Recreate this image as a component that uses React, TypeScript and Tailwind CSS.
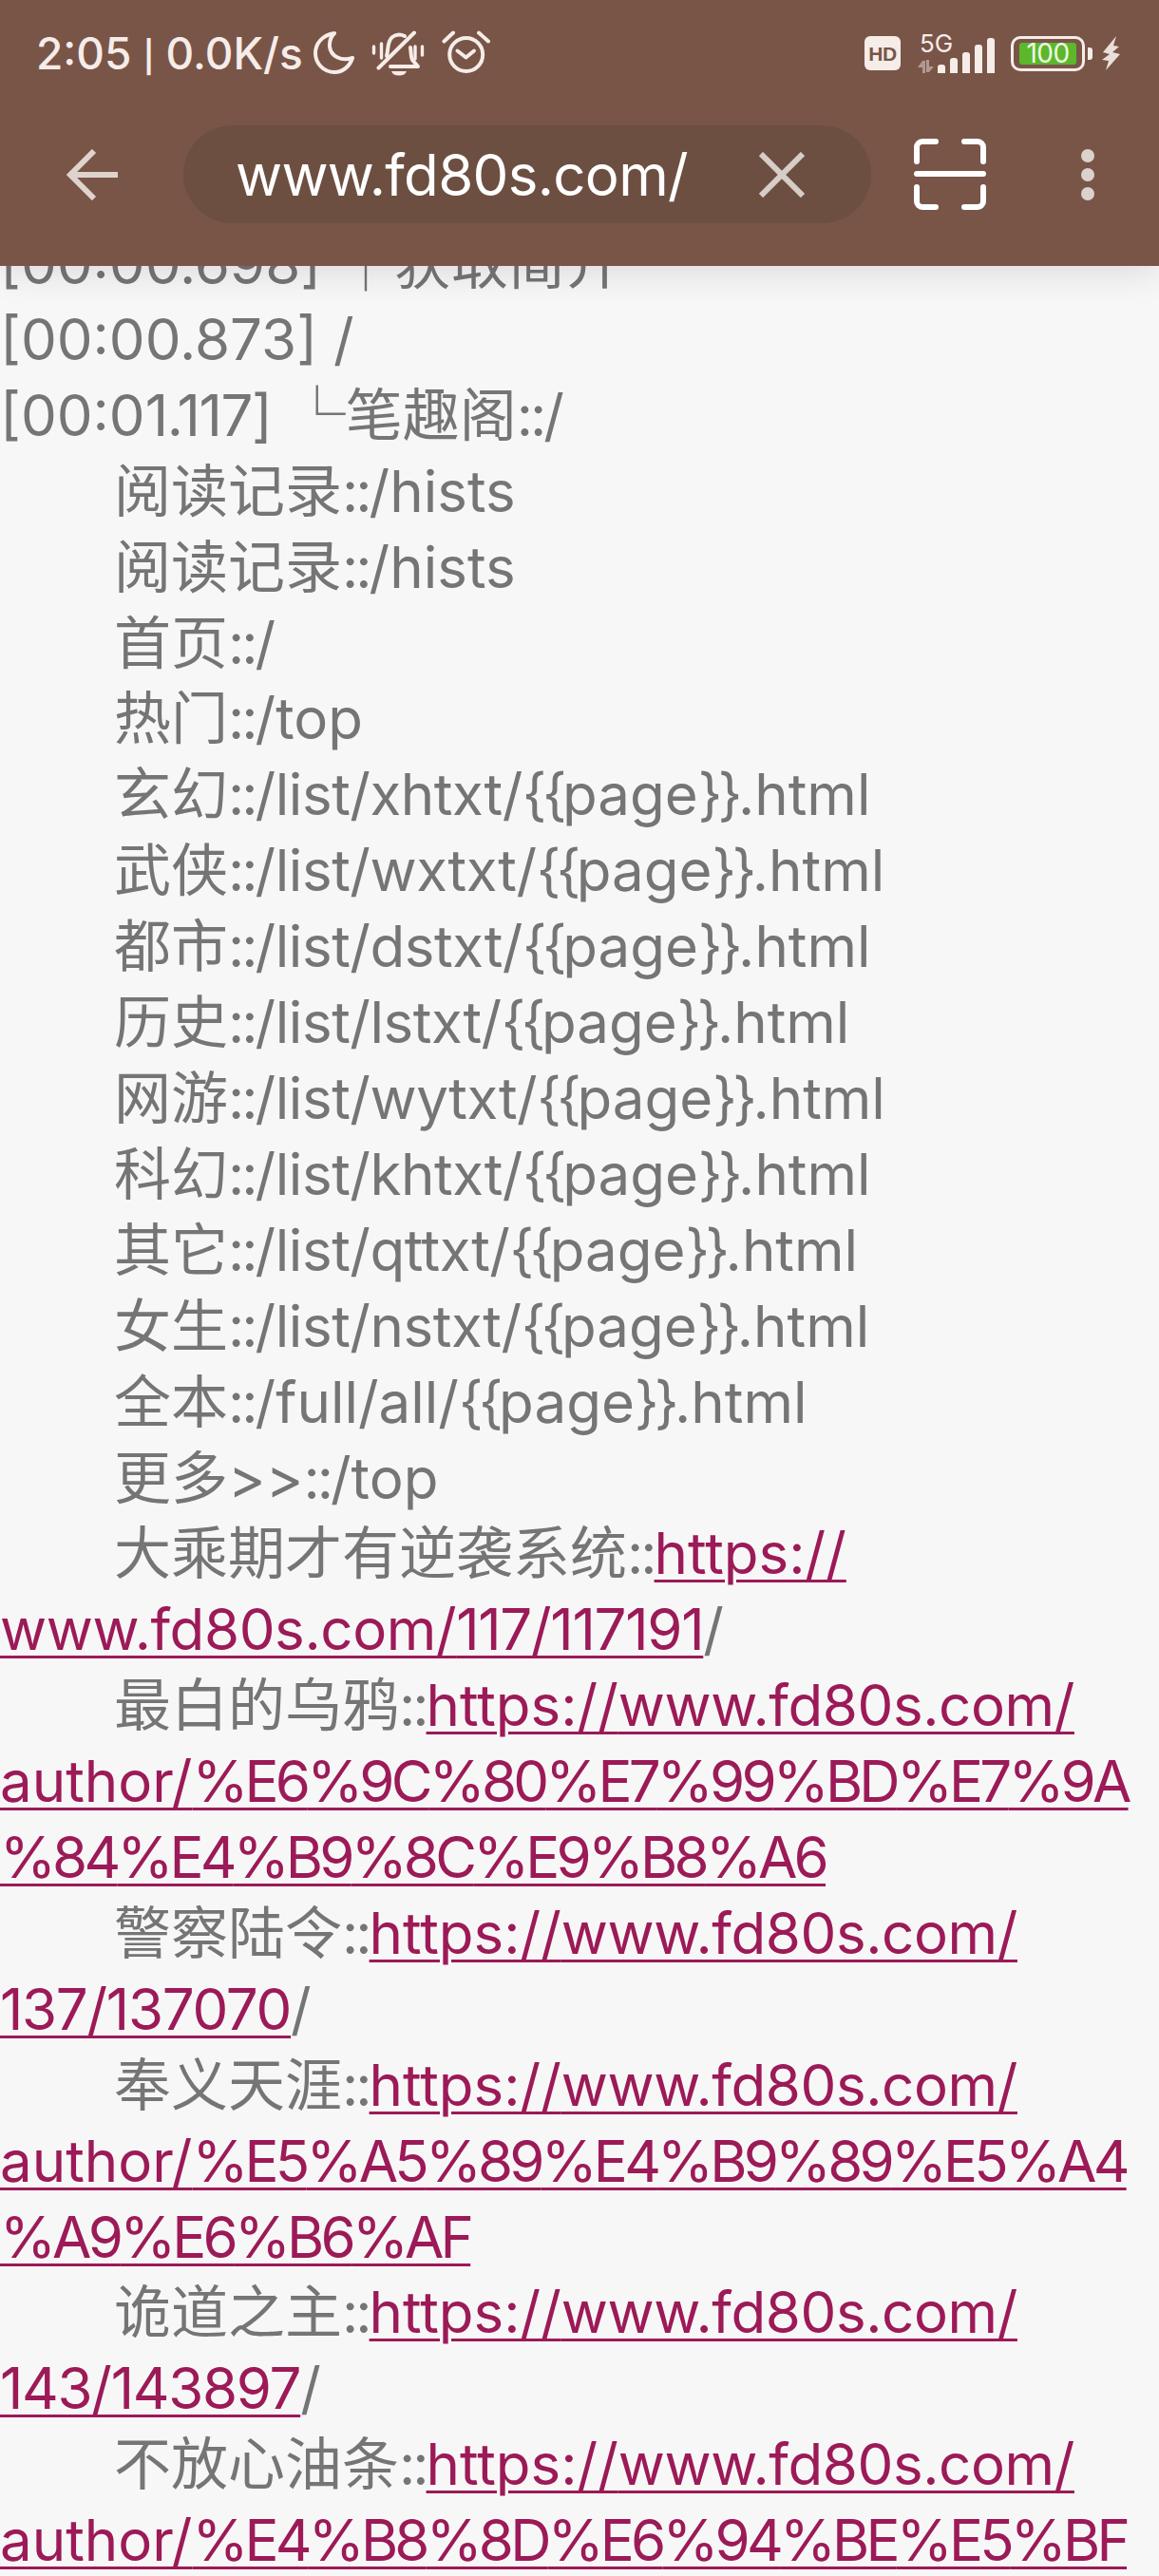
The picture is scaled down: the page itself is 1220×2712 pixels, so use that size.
const textFont = "font-['Inter','Noto_Sans_CJK_SC',sans-serif]";

type Line = { text?: string; link?: string; tail?: string; indent?: boolean };

const lines: Line[] = [
  { text: "[00:00.698] ┌获取简介" },
  { text: "[00:00.873] /" },
  { text: "[00:01.117] └笔趣阁::/" },
  { text: "阅读记录::/hists", indent: true },
  { text: "阅读记录::/hists", indent: true },
  { text: "首页::/", indent: true },
  { text: "热门::/top", indent: true },
  { text: "玄幻::/list/xhtxt/{{page}}.html", indent: true },
  { text: "武侠::/list/wxtxt/{{page}}.html", indent: true },
  { text: "都市::/list/dstxt/{{page}}.html", indent: true },
  { text: "历史::/list/lstxt/{{page}}.html", indent: true },
  { text: "网游::/list/wytxt/{{page}}.html", indent: true },
  { text: "科幻::/list/khtxt/{{page}}.html", indent: true },
  { text: "其它::/list/qttxt/{{page}}.html", indent: true },
  { text: "女生::/list/nstxt/{{page}}.html", indent: true },
  { text: "全本::/full/all/{{page}}.html", indent: true },
  { text: "更多>>::/top", indent: true },
  { text: "大乘期才有逆袭系统::", link: "https://", indent: true },
  { link: "www.fd80s.com/117/117191", tail: "/" },
  { text: "最白的乌鸦::", link: "https://www.fd80s.com/", indent: true },
  { link: "author/%E6%9C%80%E7%99%BD%E7%9A" },
  { link: "%84%E4%B9%8C%E9%B8%A6" },
  { text: "警察陆令::", link: "https://www.fd80s.com/", indent: true },
  { link: "137/137070", tail: "/" },
  { text: "奉义天涯::", link: "https://www.fd80s.com/", indent: true },
  { link: "author/%E5%A5%89%E4%B9%89%E5%A4" },
  { link: "%A9%E6%B6%AF" },
  { text: "诡道之主::", link: "https://www.fd80s.com/", indent: true },
  { link: "143/143897", tail: "/" },
  { text: "不放心油条::", link: "https://www.fd80s.com/", indent: true },
  { link: "author/%E4%B8%8D%E6%94%BE%E5%BF" },
];

function Tight({ s }: { s: string }) {
  const parts = s.split(/(::|\{\{|\}\}|%[0-9A-F]{2}|\d{3}\/\d+|1\.117|www\.fd80s\.com\/|\/list\/[a-z]+\/)/);
  return (
    <>
      {parts.map((p, i) => {
        if (p === "::") return <span key={i} className="tracking-[-3px]">{p}</span>;
        if (p === "{{" || p === "}}") return <span key={i} className="tracking-[-4.5px]">{p}</span>;
        if (p.startsWith("%")) return <span key={i} className="tracking-[-3.8px]">{p}</span>;
        if (/^\d{3}\//.test(p)) return <span key={i} className="tracking-[-1.3px]">{p}</span>;
        if (p === "1.117") return <span key={i} className="tracking-[-1.4px]">{p}</span>;
        if (p.startsWith("www")) return <span key={i} className="tracking-[-0.4px]">{p}</span>;
        if (p.startsWith("/list/")) return <span key={i} className="tracking-[-0.45px]">{p}</span>;
        return p;
      })}
    </>
  );
}

function StatusIcons() {
  return (
    <div className="flex items-center">
      {/* moon */}
      <svg className="ml-[10px]" width="44" height="48" viewBox="0 0 44 48" fill="none" stroke="#f6ece8" strokeWidth="4" strokeLinejoin="round">
        <path d="M23 3C10 5 3 14 3 24c0 11 9 20 20 20 9 0 16-6 19-15-12 4-23-2-24-12-.5-6 2-11 5-14Z" />
      </svg>
      {/* muted bell with vibrate marks */}
      <svg className="ml-[18px]" width="56" height="48" viewBox="0 0 56 48" fill="none" stroke="#f6ece8" strokeWidth="4" strokeLinecap="round" strokeLinejoin="round">
        <path d="M16 27c2-6 0-15 6-20 4-3 9-3 13-1" />
        <path d="M41 18c1 5 0 9 2 13l6 7H20" />
        <path d="M7.5 39.5 45 2.5" />
        <path d="M21 43h16c-1 3-4 4.5-8 4.5s-7-1.5-8-4.5Z" fill="#f6ece8" stroke="none" />
        <path d="M2.5 17v7M10.5 14v15M46 17v13M53.5 17v9" strokeWidth="3.4" />
      </svg>
      {/* alarm */}
      <svg className="ml-[18px]" width="52" height="48" viewBox="0 0 52 48" fill="none" stroke="#f6ece8" strokeWidth="4" strokeLinecap="round" strokeLinejoin="round">
        <circle cx="25.7" cy="25.5" r="17.5" />
        <path d="M2.5 11.5 12 2.5M49 11.5 39 2.5" />
        <path d="m16.5 21.5 9 7 8.5-7" />
      </svg>
    </div>
  );
}

function NetworkIcons() {
  return (
    <div className="flex items-center">
      <div className="flex h-[36px] w-[38px] items-center justify-center rounded-[6px] bg-[#f6ece8] font-['Liberation_Sans',sans-serif] text-[21px] leading-none font-bold tracking-[-0.5px] text-[#795548]">
        HD
      </div>
      <div className="relative ml-[16px] flex h-[42px] w-[82px] items-end">
        <span className="absolute top-[-3px] left-[4px] font-['Inter',sans-serif] text-[26px] leading-[27px] text-[#f6ece8]">5G</span>
        <svg className="absolute bottom-0 left-0" width="20" height="14" viewBox="0 0 20 14" fill="#f6ece8" opacity="0.45">
          <path d="M7 1h3v13H7V8H2ZM11 0h3v7h5l-5 6h-3Z" />
        </svg>
        <div className="ml-[23px] flex items-end gap-[5px]">
          <div className="h-[9px] w-[8px] rounded-t-[3px] bg-[#f6ece8]" />
          <div className="h-[16px] w-[8px] rounded-t-[3px] bg-[#f6ece8]" />
          <div className="h-[22px] w-[8px] rounded-t-[3px] bg-[#f6ece8]" />
          <div className="h-[30px] w-[8px] rounded-t-[3px] bg-[#f6ece8]" />
          <div className="h-[37px] w-[8px] rounded-t-[3px] bg-[#f6ece8]" />
        </div>
      </div>
      <div className="ml-[18px] flex h-[37px] w-[78px] items-center justify-center rounded-[10px] border-[3px] border-[#f6ece8]">
        <div className="flex h-[23px] w-[60px] items-center justify-center rounded-[3px] bg-[#5cb82a] font-['Inter',sans-serif] text-[28px] leading-none tracking-[-0.5px] text-[#eef7e4]">
          100
        </div>
      </div>
      <div className="ml-[3px] h-[13px] w-[5px] rounded-r-[3px] bg-[#f6ece8]" />
      <svg className="ml-[10px]" width="20" height="36" viewBox="0 0 20 36" fill="#e9dfda">
        <path d="M15 0 1 17l7 2-8 6 7 1-3 10 15-17-8-2 7-6-6-1 3-10Z" />
      </svg>
    </div>
  );
}

function Toolbar() {
  return (
    <div className="mt-[52px] flex items-center pl-[69px]">
      <svg width="55" height="54" viewBox="0 0 55 54" fill="none" stroke="#dfd3cd" strokeWidth="6">
        <path d="M55 27H6M30 2 5 27l25 25" />
      </svg>
      <div className="ml-[69px] flex h-[103px] w-[724px] items-center rounded-full bg-[#6d4f41] pr-[70px] pl-[55px]">
        <span className={`${textFont} flex-1 text-[60px] leading-none tracking-[-0.7px] text-white`}>www.fd80s.com/</span>
        <svg width="48" height="48" viewBox="0 0 48 48" fill="none" stroke="#d7cdc8" strokeWidth="6">
          <path d="M2 2l44 44M46 2 2 46" />
        </svg>
      </div>
      <svg className="ml-[45px]" width="76" height="75" viewBox="0 0 76 75" fill="none" stroke="#fff" strokeWidth="6" strokeLinecap="round">
        <path d="M3 24V9a6 6 0 0 1 6-6h14M53 3h14a6 6 0 0 1 6 6v15M3 51v15a6 6 0 0 0 6 6h14M73 51v15a6 6 0 0 1-6 6H53M3 37h70" />
      </svg>
      <div className="ml-[100px] flex flex-col gap-[6px]">
        <div className="h-[14px] w-[14px] rounded-full bg-[#dcd2cd]" />
        <div className="h-[14px] w-[14px] rounded-full bg-[#dcd2cd]" />
        <div className="h-[14px] w-[14px] rounded-full bg-[#dcd2cd]" />
      </div>
    </div>
  );
}

export default function App() {
  return (
    <div className="h-[2712px] w-[1220px] overflow-hidden bg-[#f7f7f7]">
      <header className="relative z-10 h-[280px] bg-[#795548] pt-[32px] shadow-[0_6px_36px_rgba(0,0,0,0.12)]">
        <div className="flex h-[48px] items-center justify-between pr-[40px] pl-[38px]">
          <div className="flex items-center">
            <span className="font-['Inter',sans-serif] text-[46px] leading-none font-medium text-[#f6ece8]">
              2:05 <span className="font-['Roboto',sans-serif] font-bold">|</span> 0.0K/s
            </span>
            <StatusIcons />
          </div>
          <NetworkIcons />
        </div>
        <Toolbar />
      </header>
      <main className={`${textFont} mt-[-42px] text-[60px] leading-[79.9px] whitespace-pre text-[#757575]`}>
        {lines.map((line, i) => (
          <div key={i} className={line.indent ? "pl-[120px]" : ""}>
            {line.text && <Tight s={line.text} />}
            {line.link && (
              <a className="text-[#9c1a57] underline decoration-[3px] underline-offset-[6px]">
                <Tight s={line.link} />
              </a>
            )}
            {line.tail}
          </div>
        ))}
      </main>
    </div>
  );
}
